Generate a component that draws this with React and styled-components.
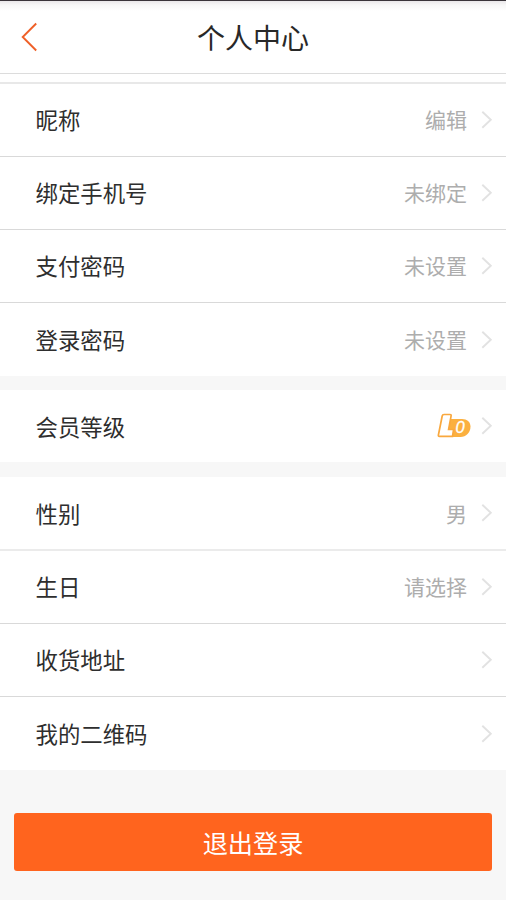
import React from 'react';
import styled, { createGlobalStyle } from 'styled-components';

const GlobalStyle = createGlobalStyle`
  body {
    margin: 0;
    background: #f7f7f7;
    font-family: 'Noto Sans CJK SC', sans-serif;
  }
`;

const groups = [
  [
    { label: '昵称', value: '编辑' },
    { label: '绑定手机号', value: '未绑定' },
    { label: '支付密码', value: '未设置' },
    { label: '登录密码', value: '未设置' },
  ],
  [
    { label: '会员等级', level: 0 },
  ],
  [
    { label: '性别', value: '男', soft: true },
    { label: '生日', value: '请选择' },
    { label: '收货地址' },
    { label: '我的二维码' },
  ],
];

const Page = styled.div`
  min-height: 900px;
  box-sizing: border-box;
  overflow: hidden;
`;

const Header = styled.header`
  display: grid;
  grid-template-columns: 60px 1fr 60px;
  align-items: center;
  box-sizing: border-box;
  height: 74px;
  padding-bottom: 1px;
  border-top: 1px solid #39343a;
  border-bottom: 1px solid #dcdcdc;
  background: linear-gradient(#e9e7e9 0, #f7f7f7 4px, #fbfbfb 7px, #fff 10px);
`;

const BackButton = styled.button`
  display: flex;
  padding: 0 0 0 20px;
  border: none;
  background: none;
  cursor: pointer;
`;

const Title = styled.h1`
  margin: 0;
  color: #282828;
  font-size: 28px;
  font-weight: 400;
  line-height: 40px;
  text-align: center;
`;

const Strip = styled.div`
  height: 8px;
  background: #fff;
  border-bottom: 2px solid #e8e8e8;
`;

const Group = styled.section`
  margin-bottom: 14px;
  background: #fff;

  & + & {
    margin-bottom: 15px;
  }
`;

const Label = styled.span`
  flex: 1;
  padding-bottom: 2px;
  color: #2e2e2e;
  font-size: 22.4px;
  line-height: 32px;
`;

const Value = styled.span`
  margin-right: 13px;
  padding-bottom: 2px;
  color: #adadad;
  font-size: 21px;
  line-height: 30px;
`;

const Row = styled.div`
  display: flex;
  align-items: center;
  box-sizing: border-box;
  height: ${props => props.$height}px;
  padding: 0 13px 0 35.5px;
  border-bottom: ${props => props.$soft ? '2px solid #ebebeb' : '1px solid #d9d9d9'};

  &:last-child {
    border-bottom: none;
  }

  &:first-child:last-child ${Label} {
    padding-bottom: 0;
  }

  ${props => props.$soft && `
    ${Label}, ${Value} {
      padding-bottom: 0;
    }
  `}
`;

const Badge = styled.svg`
  margin-right: 9px;
`;

const Logout = styled.button`
  display: block;
  width: calc(100% - 28px);
  height: 58px;
  margin: 43px 14px 0;
  padding: 0;
  border: none;
  border-radius: 3px;
  background: #ff641e;
  color: #fff;
  font-family: inherit;
  font-size: 25.2px;
  line-height: 58px;
  cursor: pointer;
`;

const LevelBadge = ({ level }) => (
  <Badge width="34" height="26" viewBox="0 0 34 26">
    <path d="M10 6H25C30 6 33.5 9 33.5 13.5C33.5 19.5 29 24 23.5 24H8Z" fill="#fbb040" />
    <path
      d="M7 1.5H13Q14.4 1.5 14.1 2.8L11.6 16.5H16.6L15.5 23.4H2.4Q1.1 23.4 1.4 22L5.2 3Q5.5 1.5 7 1.5Z"
      fill="#fff"
      stroke="#f9a83e"
      strokeWidth="1.7"
    />
    <text
      x="18.5"
      y="20.3"
      fill="#fff"
      stroke="#fff"
      strokeWidth="0.3"
      fontFamily="Liberation Sans, sans-serif"
      fontSize="16.5"
      fontStyle="italic"
    >
      {level}
    </text>
  </Badge>
);

const Arrow = () => (
  <svg width="13" height="20" viewBox="0 0 13 20" fill="none" stroke="#e2e2e2" strokeWidth="1.9">
    <path d="M2.3 1.8L10.8 9.8L2.3 17.8" />
  </svg>
);

const App = () => (
  <Page>
    <GlobalStyle />

    <Header>
      <BackButton aria-label="返回">
        <svg width="18" height="30" viewBox="0 0 18 30" fill="none" stroke="#ef6028" strokeWidth="1.9">
          <path d="M16.2 1.5L2.7 15L16.2 28.5" />
        </svg>
      </BackButton>
      <Title>个人中心</Title>
    </Header>
    <Strip />

    {groups.map((rows, index) => (
      <Group key={index}>
        {rows.map(row => (
          <Row key={row.label} $soft={row.soft} $height={row.soft ? 74 : rows.length === 1 ? 72 : 73}>
            <Label>{row.label}</Label>
            {row.value && <Value>{row.value}</Value>}
            {row.level !== undefined && <LevelBadge level={row.level} />}
            <Arrow />
          </Row>
        ))}
      </Group>
    ))}

    <Logout>退出登录</Logout>
  </Page>
);

export default App;
